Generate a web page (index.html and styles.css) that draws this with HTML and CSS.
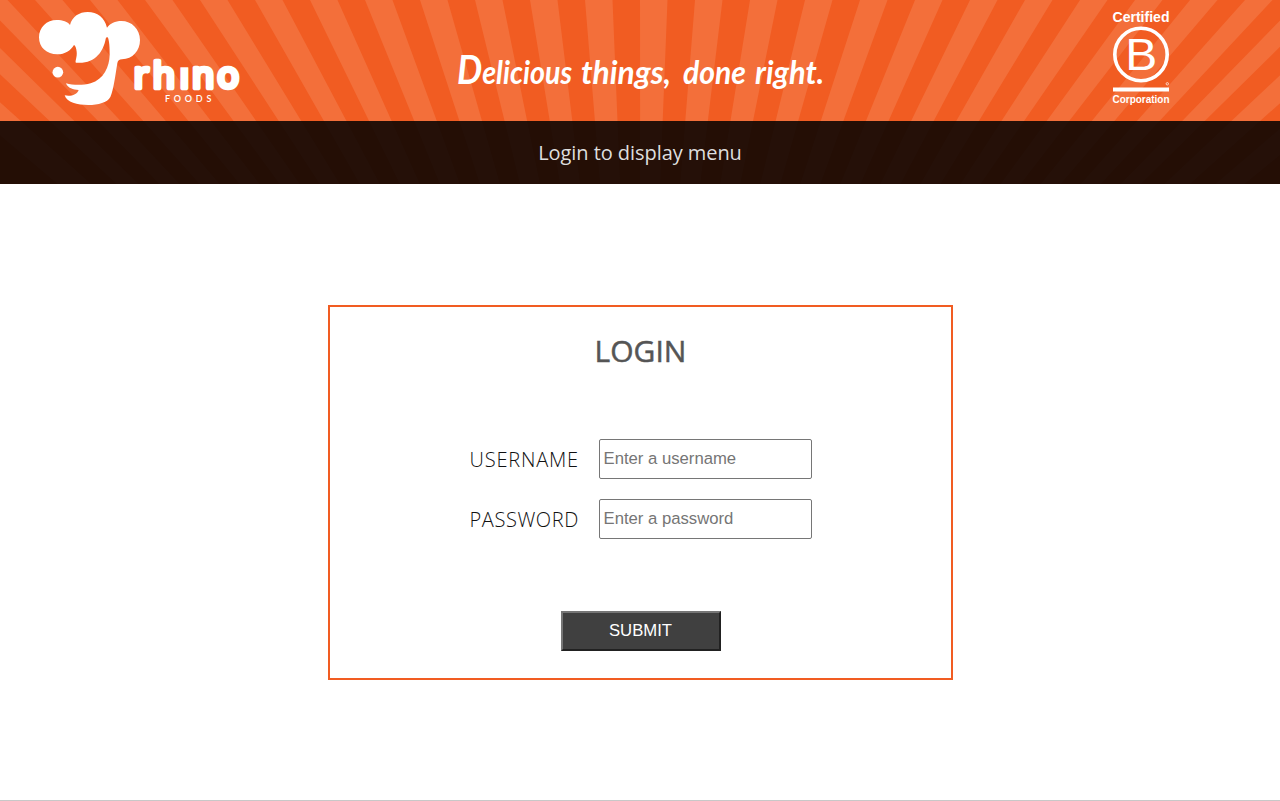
FILE: index.html
```
<!DOCTYPE html>
<html lang="en">
<head>
<meta charset="utf-8">
<title>Rhino Foods - Login</title>
<link rel="stylesheet" href="styles.css">
</head>
<body>
<header class="header">
  <svg class="rays" viewBox="0 0 1280 184" aria-hidden="true"><path id="rays" fill="#f36f3a"/></svg>
  <div class="banner">
    <svg class="logo" viewBox="117 36 606 279" role="img" aria-label="Rhino Foods">
      <defs><clipPath id="dotless"><path d="M380 160H533V202H570V190H740V285H380Z"/></clipPath></defs>
      <path fill="#fff" d="M210 75C216 50 238 36 263 36C292 36 314 53 321 83C330 70 346 63 364 63C395 63 420 87 420 120C420 152 398 177 366 178C358 178 353 182 352 190C346 225 341 270 331 291C322 308 295 315 265 315C232 315 200 307 194 286C210 290 232 285 236 270C220 269 203 265 198 250C220 256 250 256 272 250C312 238 328 200 329 165C329 140 328 125 324 113C321 110 318 112 317 117C310 155 285 193 228 188C224 184 232 172 230 155C229 145 226 137 222 135C212 152 195 163 172 163C140 163 117 143 117 112C117 82 140 60 170 60C188 60 203 65 210 75Z"/>
      <circle cx="173.500" cy="216.500" r="16" fill="#fff"/>
      <text class="wordmark" x="401 458 539 576 652" y="265" clip-path="url(#dotless)">rhino</text>
      <text class="foods" x="495" y="305" textLength="139" lengthAdjust="spacing">FOODS</text>
    </svg>
    <svg class="tagline" viewBox="450 44 380 62">
      <text x="457" y="84" textLength="115" lengthAdjust="spacingAndGlyphs"><tspan class="initial">D</tspan>elicious</text>
      <text x="581" y="84" textLength="90" lengthAdjust="spacingAndGlyphs">things,</text>
      <text x="683" y="84" textLength="63" lengthAdjust="spacingAndGlyphs">done</text>
      <text x="755" y="84" textLength="69" lengthAdjust="spacingAndGlyphs">right.</text>
    </svg>
    <svg class="bcorp" viewBox="1112 10 58 97">
      <text x="1112.500" y="22.300" font-size="14" font-weight="700" textLength="57" lengthAdjust="spacingAndGlyphs">Certified</text>
      <circle cx="1141" cy="54.500" r="26.200" fill="none" stroke="#fff" stroke-width="3.600"/>
      <text x="1125.200" y="69.800" font-size="44" textLength="32" lengthAdjust="spacingAndGlyphs">B</text>
      <circle cx="1167.300" cy="83.800" r="1.200" fill="none" stroke="#fff" stroke-width=".7"/>
      <path d="M1113 89.500H1169" stroke="#fff" stroke-width="4"/>
      <text x="1112.500" y="103.200" font-size="10.500" font-weight="700" textLength="57" lengthAdjust="spacingAndGlyphs">Corporation</text>
    </svg>
  </div>
  <nav class="nav"><span>Login to display menu</span></nav>
</header>
<main class="main">
  <form class="card">
    <h1 class="title">LOGIN</h1>
    <div class="fields">
      <label class="label label-user" for="u">USERNAME</label><input class="input" id="u" type="text" placeholder="Enter a username">
      <label class="label label-pass" for="p">PASSWORD</label><input class="input" id="p" type="password" placeholder="Enter a password">
    </div>
    <button class="submit" type="button">SUBMIT</button>
  </form>
</main>
<script src="rays.js"></script>
</body>
</html>
```
FILE: styles.css
```
* { box-sizing: border-box; }
body { margin: 0; height: 801px; overflow: hidden; background: #fff; font-family: "Open Sans", "Noto Sans", sans-serif; display: flex; flex-direction: column; }
.header { position: relative; height: 184px; flex: none; background: #f15c22; }
.rays { position: absolute; inset: 0; width: 1280px; height: 184px; }
.banner { position: relative; height: 121px; display: flex; align-items: flex-start; padding: 0 110px 0 39px; }
.logo { width: 202px; height: 93px; margin-top: 12px; }
.wordmark { font: 400 108px "Noto Sans", sans-serif; fill: #fff; stroke: #fff; stroke-width: 14px; stroke-linejoin: round; }
.foods { font: 600 27px Lato, sans-serif; fill: #fff; }
.tagline { width: 380px; height: 62px; margin: 44px 0 0 209px; font: italic 700 33px Lato, sans-serif; fill: #fff; }
.initial { font-size: 41px; }
.bcorp { width: 58px; height: 97px; margin: 10px 0 0 auto; font-family: "Liberation Sans", Arial, sans-serif; fill: #fff; }
.nav { position: relative; height: 63px; background: rgba(0,0,0,.85); color: #dedede; display: flex; justify-content: center; align-items: center; font: 400 20px "Open Sans", sans-serif; letter-spacing: -.06px; }
.main { flex: 1; display: flex; justify-content: center; align-items: flex-start; padding: 121px 0 0 1px; border-bottom: 1px solid #c8c8c8; }
.card { width: 625px; height: 375px; border: 2px solid #f15c22; display: flex; flex-direction: column; align-items: center; padding-top: 24px; }
.title { margin: 0; font-size: 30px; line-height: 40px; font-weight: 500; color: #555; -webkit-text-stroke: .5px #555; }
.fields { display: grid; grid-template-columns: 109px 213px; gap: 20px; margin-top: 68px; }
.label { font-size: 20px; line-height: 42px; height: 40px; font-weight: 300; color: #111; white-space: nowrap; }
.label-user { letter-spacing: .8px; }
.label-pass { letter-spacing: .6px; }
.input { width: 213px; height: 40px; border: 1px solid #767676; border-radius: 2px; padding: 1px 4px; font: 16.7px "Liberation Sans", Arial, sans-serif; background: #fff; }
.input::placeholder { color: #757575; }
.submit { width: 160px; height: 40px; margin-top: 72px; padding: 0; border: 2px solid; border-color: #767676 #212121 #212121 #767676; background: #404040; color: #fff; font: 16.7px "Liberation Sans", Arial, sans-serif; }
```
FILE: rays.js
```
// Light rays converge on a point below the header.
const cx = 640.5, cy = 677, bands = [[-160, -114], [-79, -49], [1360, 1395], [1430, 1470]];
for (let k = -12; k <= 12; k++) bands.push([640 + 55 * k, 667.5 + 55 * k]);
document.getElementById("rays").setAttribute("d",
  bands.map(([a, b]) => `M${a} 0L${cx} ${cy}L${b} 0Z`).join(""));
```
